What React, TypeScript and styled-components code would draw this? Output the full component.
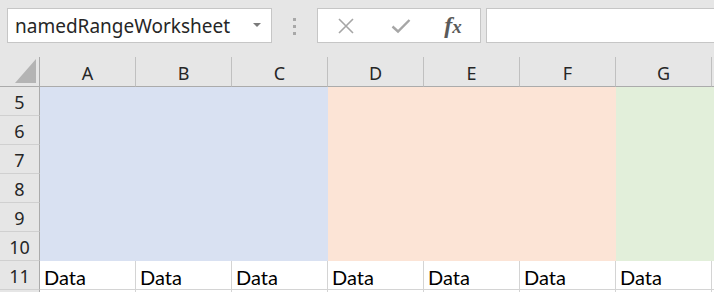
import React from "react";
import styled, { createGlobalStyle } from "styled-components";

const GlobalStyle = createGlobalStyle`
    html, body {
        margin: 0;
        padding: 0;
        background: #e6e6e6;
        overflow: hidden;
    }
    * {
        box-sizing: border-box;
    }
`;

const COLUMNS = ["A", "B", "C", "D", "E", "F", "G", ""];
const FILL_ROWS = [5, 6, 7, 8, 9, 10];
const FILLS = ["#d9e1f2", "#d9e1f2", "#d9e1f2", "#fce4d6", "#fce4d6", "#fce4d6", "#e2efda", "#e2efda"];

const App = () => {
    return (
        <>
            <GlobalStyle />
            <Page>
                <Toolbar>
                    <NameBox>
                        <NameText>namedRangeWorksheet</NameText>
                        <DropArrow />
                    </NameBox>
                    <Grip>
                        <GripDot />
                        <GripDot />
                        <GripDot />
                    </Grip>
                    <FormulaButtons>
                        <IconSlot>
                            <svg width="18" height="18" viewBox="0 0 18 18">
                                <path d="M2 2 L16 16 M16 2 L2 16" stroke="#a6a6a6" strokeWidth="1.6" fill="none" />
                            </svg>
                        </IconSlot>
                        <IconSlot>
                            <svg width="20" height="16" viewBox="0 0 20 16">
                                <path d="M1.5 8.5 L7 13.5 L18.5 2" stroke="#a6a6a6" strokeWidth="2.4" fill="none" />
                            </svg>
                        </IconSlot>
                        <IconSlot>
                            <FxText>
                                f<small>x</small>
                            </FxText>
                        </IconSlot>
                    </FormulaButtons>
                    <FormulaInput />
                </Toolbar>
                <Sheet>
                    <Corner>
                        <svg width="21" height="24" viewBox="0 0 21 24">
                            <polygon points="21,0 21,24 0,24" fill="#b4b4b4" />
                        </svg>
                    </Corner>
                    {COLUMNS.map((c, i) => (
                        <ColHead key={"h" + i}>{c}</ColHead>
                    ))}
                    {FILL_ROWS.map((r) => (
                        <React.Fragment key={r}>
                            <RowHead>{r}</RowHead>
                            {COLUMNS.map((_, i) => (
                                <FilledCell key={i} $fill={FILLS[i]} />
                            ))}
                        </React.Fragment>
                    ))}
                    <RowHead>11</RowHead>
                    {COLUMNS.map((c, i) => (
                        <DataCell key={"d" + i}>{c ? "Data" : ""}</DataCell>
                    ))}
                    <RowHead />
                    {COLUMNS.map((_, i) => (
                        <DataCell key={"e" + i} />
                    ))}
                </Sheet>
            </Page>
        </>
    );
};
export default App;

const Page = styled.div`
    width: 714px;
    height: 292px;
    overflow: hidden;
    background: #e6e6e6;
`;

const Toolbar = styled.div`
    display: flex;
    align-items: flex-start;
    height: 57px;
    padding: 8px 0 0 7px;
`;

const NameBox = styled.div`
    position: relative;
    display: flex;
    align-items: center;
    width: 265px;
    height: 35px;
    background: #ffffff;
    border: 1px solid #c6c6c6;
    padding-left: 7px;
`;

const NameText = styled.span`
    font-family: "Noto Sans", "Open Sans", sans-serif;
    font-size: 19px;
    color: #262626;
`;

const DropArrow = styled.span`
    position: absolute;
    right: 10px;
    top: 14px;
    width: 0;
    height: 0;
    border-left: 4px solid transparent;
    border-right: 4px solid transparent;
    border-top: 4px solid #7a7a7a;
`;

const Grip = styled.div`
    display: flex;
    flex-direction: column;
    gap: 4px;
    width: 45px;
    height: 35px;
    align-items: center;
    padding-top: 10px;
`;

const GripDot = styled.span`
    width: 3px;
    height: 3px;
    background: #a8a8a8;
`;

const FormulaButtons = styled.div`
    display: flex;
    align-items: center;
    width: 164px;
    height: 35px;
    background: #ffffff;
    border: 1px solid #c6c6c6;
    padding-left: 18px;
`;

const IconSlot = styled.div`
    display: flex;
    align-items: center;
    justify-content: center;
    height: 100%;
    &:first-child {
        width: 20px;
        margin-right: 35px;
    }
    &:nth-child(2) {
        width: 20px;
        margin-right: 30px;
    }
    &:last-child {
        width: 24px;
    }
`;

const FxText = styled.span`
    font-family: "Liberation Serif", "DejaVu Serif", serif;
    font-style: italic;
    font-weight: bold;
    font-size: 24px;
    color: #5a5a5a;
    small {
        font-size: 19px;
    }
`;

const FormulaInput = styled.div`
    flex: 1;
    height: 35px;
    margin-left: 5px;
    background: #ffffff;
    border: 1px solid #c6c6c6;
    border-right: none;
`;

const Sheet = styled.div`
    display: grid;
    grid-template-columns: 40px repeat(8, 96px);
    grid-template-rows: 30px repeat(6, 29px) 29px 29px;
`;

const Corner = styled.div`
    display: flex;
    align-items: flex-end;
    justify-content: flex-end;
    padding: 0 3px 3px 0;
    background: #e6e6e6;
    border-right: 1px solid #ababab;
    border-bottom: 1px solid #ababab;
`;

const ColHead = styled.div`
    display: flex;
    align-items: center;
    justify-content: center;
    padding-top: 2px;
    background: #e6e6e6;
    border-right: 1px solid #c0c0c0;
    border-bottom: 1px solid #ababab;
    font-family: "Noto Sans", "Open Sans", sans-serif;
    font-size: 18px;
    color: #262626;
`;

const RowHead = styled.div`
    display: flex;
    align-items: center;
    justify-content: center;
    padding-top: 1px;
    background: #e6e6e6;
    border-right: 1px solid #ababab;
    border-bottom: 1px solid #d0d0d0;
    font-family: "Noto Sans", "Open Sans", sans-serif;
    font-size: 18px;
    color: #262626;
`;

const FilledCell = styled.div<{ $fill: string }>`
    background: ${({ $fill }) => $fill};
`;

const DataCell = styled.div`
    display: flex;
    align-items: center;
    padding: 3px 0 0 4px;
    background: #ffffff;
    border-right: 1px solid #d4d4d4;
    border-bottom: 1px solid #d4d4d4;
    font-family: "Lato", "Liberation Sans", sans-serif;
    font-size: 20px;
    color: #000000;
`;
